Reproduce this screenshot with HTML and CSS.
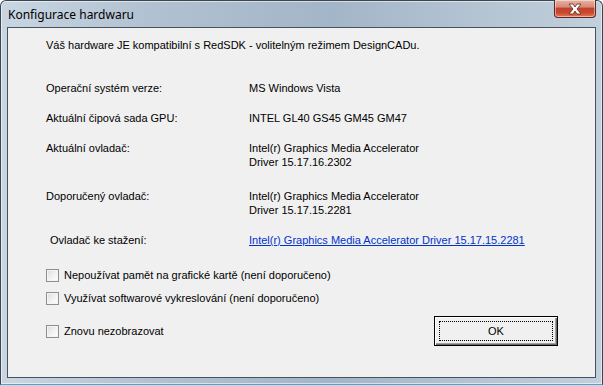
FILE: index.html
```html
<!DOCTYPE html>
<html>
<head>
<meta charset="utf-8">
<link rel="stylesheet" href="styles.css">
</head>
<body>
<div class="window">
  <div class="titlebar">
    <span class="title">Konfigurace hardwaru</span>
    <div class="close">
      <svg width="18" height="12" viewBox="0 0 18 12">
        <path d="M3 1 L7 1 L9 4 L11 1 L15 1 L11 6 L15 11 L11 11 L9 8 L7 11 L3 11 L7 6 Z" fill="#ffffff" stroke="#5a2a22" stroke-width="0.8" stroke-linejoin="round"/>
      </svg>
    </div>
  </div>
  <div class="client">
    <div class="intro">Váš hardware JE kompatibilní s RedSDK - volitelným režimem DesignCADu.</div>
    <div class="info">
      <div class="row r1"><span class="label">Operační systém verze:</span><span class="value">MS Windows Vista</span></div>
      <div class="row r2"><span class="label">Aktuální čipová sada GPU:</span><span class="value">INTEL GL40 GS45 GM45 GM47</span></div>
      <div class="row r3"><span class="label">Aktuální ovladač:</span><span class="value">Intel(r) Graphics Media Accelerator<br>Driver 15.17.16.2302</span></div>
      <div class="row r4"><span class="label">Doporučený ovladač:</span><span class="value">Intel(r) Graphics Media Accelerator<br>Driver 15.17.15.2281</span></div>
      <div class="row r5"><span class="label indent">Ovladač ke stažení:</span><span class="value"><a class="link" href="#">Intel(r) Graphics Media Accelerator Driver 15.17.15.2281</a></span></div>
    </div>
    <div class="checks">
      <label class="check c1"><span class="box"></span>Nepoužívat pamět na grafické kartě (není doporučeno)</label>
      <label class="check c2"><span class="box"></span>Využívat softwarové vykreslování (není doporučeno)</label>
    </div>
    <div class="footer">
      <label class="check"><span class="box"></span>Znovu nezobrazovat</label>
      <div class="okbtn"><span class="focus">OK</span></div>
    </div>
  </div>
</div>
</body>
</html>
```

FILE: styles.css
```css
html, body {
  margin: 0;
  padding: 0;
  background: #ffffff;
}
.window {
  width: 603px;
  height: 385px;
  box-sizing: border-box;
  border: 1px solid #3a4652;
  border-bottom-color: #29b6e6;
  border-radius: 6px 6px 0 0;
  background: linear-gradient(90deg, #c9d6e2 0%, #b1c1d1 25%, #a3b5c8 55%, #b4c4d3 80%, #c2cfdc 100%);
  box-shadow: inset 0 0 0 1px rgba(255,255,255,0.55);
  display: flex;
  flex-direction: column;
  font-family: "Liberation Sans", Arial, sans-serif;
  font-size: 11px;
  color: #000;
}
.titlebar {
  height: 26px;
  display: flex;
  align-items: flex-start;
  justify-content: space-between;
}
.title {
  font-family: "Noto Sans", "Open Sans", sans-serif;
  font-size: 12px;
  padding: 5px 0 0 7px;
  color: #000;
}
.close {
  width: 42px;
  height: 18px;
  margin: -1px 6px 0 0;
  box-sizing: border-box;
  border: 1px solid #5a2a22;
  border-top: none;
  border-radius: 0 0 4px 4px;
  background: linear-gradient(180deg, #e8b3a6 0%, #d88a76 40%, #c2412a 50%, #c8492f 75%, #e07a52 100%);
  box-shadow: inset 0 0 0 1px rgba(255,255,255,0.45);
  display: flex;
  align-items: center;
  justify-content: center;
}
.client {
  flex: 1;
  margin: 0 6px 6px 6px;
  border: 1px solid #46525e;
  background: #f0f0f0;
  padding: 10px 0 0 38px;
  line-height: 14px;
}
.intro {
  height: 14px;
}
.info {
  margin-top: 29px;
}
.row {
  display: grid;
  grid-template-columns: 203px 1fr;
}
.r2 { margin-top: 16px; }
.r3 { margin-top: 16px; }
.r4 { margin-top: 20px; }
.r5 { margin-top: 16px; }
.indent { padding-left: 4px; }
.link {
  color: #0033cc;
  text-decoration: underline;
}
.checks {
  margin-top: 21px;
  display: flex;
  flex-direction: column;
  gap: 9px;
}
.check {
  display: flex;
  align-items: center;
  gap: 5px;
  height: 14px;
}
.box {
  width: 13px;
  height: 13px;
  box-sizing: border-box;
  border: 1px solid #8e8f8f;
  background: linear-gradient(135deg, #dcdcdc 0%, #f4f4f4 60%, #ffffff 100%);
  box-shadow: inset 0 0 0 1px #f4f4f4;
}
.footer {
  margin-top: 11px;
  display: flex;
  align-items: center;
  justify-content: space-between;
  padding-right: 37px;
}
.okbtn {
  width: 124px;
  height: 30px;
  box-sizing: border-box;
  border: 1px solid #000;
  background: #f0f0f0;
  box-shadow: inset 1px 1px 0 #ffffff, inset -1px -1px 0 #696969, inset -2px -2px 0 #a0a0a0;
  display: flex;
  padding: 4px;
}
.focus {
  flex: 1;
  border: 1px dotted #000;
  display: flex;
  align-items: center;
  justify-content: center;
}
```
